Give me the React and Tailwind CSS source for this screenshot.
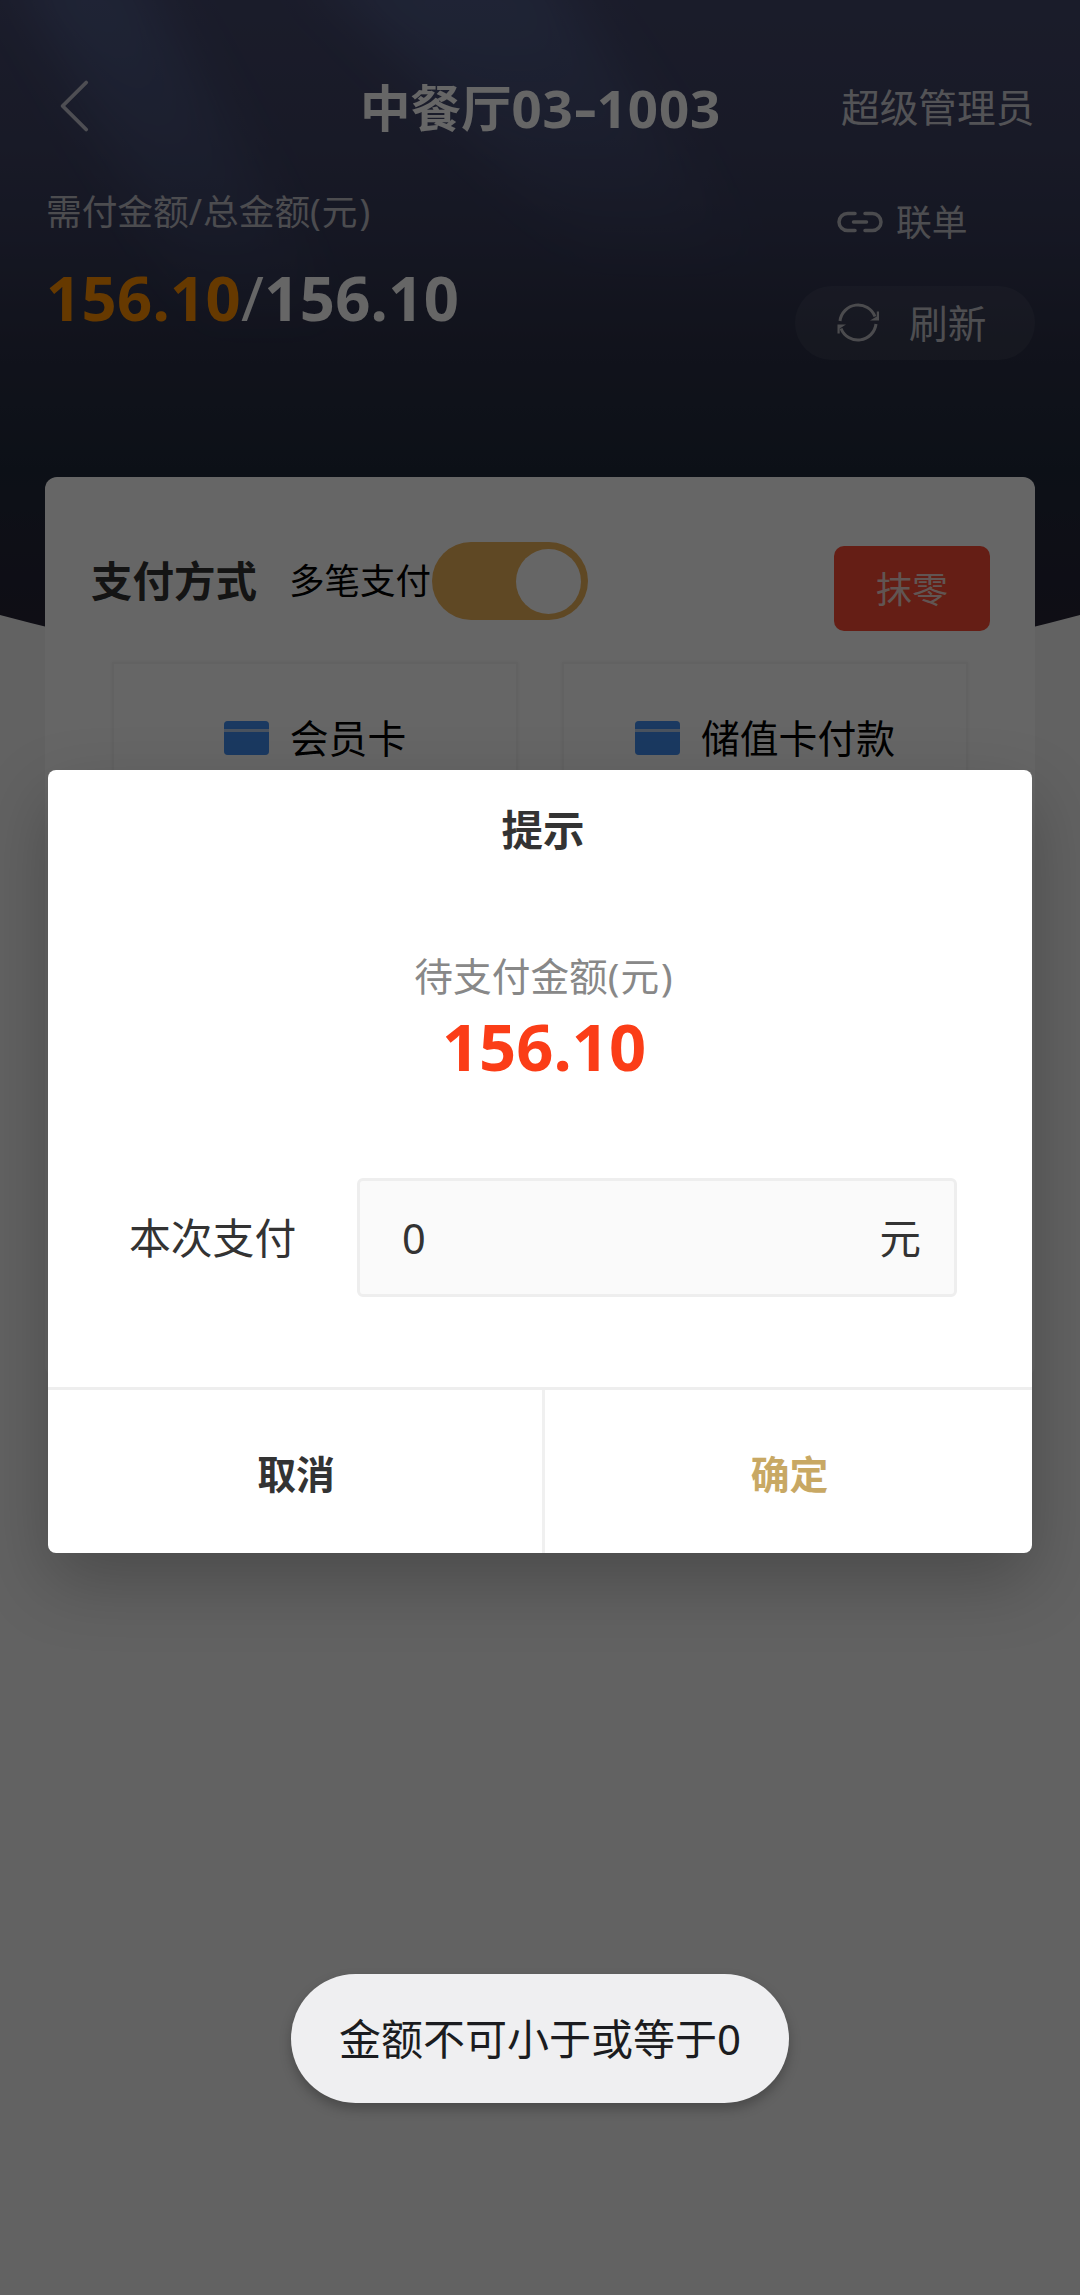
function BackIcon() {
  return (
    <svg className="h-[54px] w-8" viewBox="0 0 32 54" fill="none" stroke="#c4c4d0" strokeWidth="3.8" strokeLinecap="round" strokeLinejoin="round">
      <path d="M28.200 3.500 4.600 27l23.600 23.500" />
    </svg>
  );
}

function LinkIcon() {
  return (
    <svg className="h-6 w-12" viewBox="0 0 48 24" fill="none" stroke="#bcbcc4" strokeWidth="3.500" strokeLinecap="round">
      <path d="M19 3.500H11.500a8.500 8.500 0 0 0 0 17H19" />
      <path d="M29 3.500H36.500a8.500 8.500 0 0 1 0 17H29" />
      <path d="M17.500 12h13" />
    </svg>
  );
}

function RefreshIcon() {
  return (
    <svg className="h-[42px] w-[44px]" viewBox="0 0 44 42" fill="none" stroke="#bcbcc2" strokeWidth="3">
      <path d="M4 19A18.200 18.200 0 0 1 39 14.500" />
      <path d="M40 22A18.200 18.200 0 0 1 5 26.500" />
      <path d="M34 18.500H43V9.500L40.800 9.500V14.500Z" fill="#bcbcc2" stroke="none" />
      <path d="M10 22.500H1.500V31.500L3.700 31.500V26.500Z" fill="#bcbcc2" stroke="none" />
    </svg>
  );
}

function CardIcon() {
  return (
    <div className="flex h-[34px] w-[45px] flex-col gap-[3px] overflow-hidden rounded-[4px] bg-[#b9cfee]">
      <div className="h-2 bg-[#4390f2]" />
      <div className="flex-1 bg-[#4390f2]" />
    </div>
  );
}

function PayMethod({ label }) {
  return (
    <div className="flex h-[190px] w-[406px] items-start justify-center gap-[21px] border-2 border-[#f4f4f4] pt-[54px] shadow-[0_0_4px_rgba(0,0,0,0.060)]">
      <div className="flex h-10 items-center">
        <CardIcon />
      </div>
      <span className="text-[38.800px] leading-10 text-black">{label}</span>
    </div>
  );
}

function Header() {
  return (
    <header className="relative h-[477px]">
      <svg className="absolute left-0 top-0 h-[700px] w-[1080px]" viewBox="0 0 1080 700">
        <defs>
          <linearGradient id="night" x1="0" y1="0" x2="0" y2="1">
            <stop offset="0" stopColor="#43476a" />
            <stop offset="0.200" stopColor="#3e4262" />
            <stop offset="0.350" stopColor="#363a57" />
            <stop offset="0.500" stopColor="#2c3047" />
            <stop offset="0.680" stopColor="#202a3b" />
            <stop offset="0.800" stopColor="#242639" />
            <stop offset="0.900" stopColor="#262335" />
          </linearGradient>
          <linearGradient id="ray" x1="0" y1="0" x2="0" y2="1">
            <stop offset="0" stopColor="#5f76b0" stopOpacity="0.450" />
            <stop offset="1" stopColor="#5f76b0" stopOpacity="0" />
          </linearGradient>
          <filter id="soft" x="-50%" y="-50%" width="200%" height="200%">
            <feGaussianBlur stdDeviation="26" />
          </filter>
        </defs>
        <path d="M0 0H1080V615Q540 760 0 615Z" fill="url(#night)" />
        <g filter="url(#soft)" fill="url(#ray)">
          <path d="M10 -40H130L350 340H210Z" />
          <path d="M310 -40H540L760 270H600Z" />
        </g>
      </svg>
      <div className="relative flex h-full flex-col pt-[68px]">
        <div className="grid h-[78px] grid-cols-[360px_1fr_239px] items-start">
          <div className="flex h-[76px] items-center pl-[58px]">
            <BackIcon />
          </div>
          <h1 className="flex pt-[2px] text-[50.500px] font-bold leading-[76px] whitespace-nowrap text-white">
            <span>中餐厅</span>
            <span className="text-[52.800px] tracking-[0.900px]">03</span>
            <span className="w-[23px] origin-left scale-x-135 text-[52.500px]">-</span>
            <span className="text-[52.800px] tracking-[0.900px]">1003</span>
          </h1>
          <span className="pt-px text-[38.700px] leading-[76px] text-[#d0d0d6]">超级管理员</span>
        </div>
        <div className="flex justify-between pl-[46px] pr-[45px]">
          <div className="pt-[41px]">
            <div className="text-[35.700px] leading-[48px] text-[#bdbdc6]">
              需付金额<span className="tracking-[1px]">/</span>总金额<span className="tracking-[1px]">(</span>元<span className="pl-[2px]">)</span>
            </div>
            <div className="mt-[24px] text-[61.500px] font-bold leading-[76px] tracking-[0.300px] text-white">
              <span className="text-[#ff9000]">156.10</span>
              <span className="font-normal">/</span>156.10
            </div>
          </div>
          <div className="w-[240px] pt-[52px]">
            <div className="flex h-12 items-center gap-3 pl-[41px]">
              <LinkIcon />
              <span className="text-[35.800px] leading-[48px] text-[#c0c0c8]">联单</span>
            </div>
            <div className="mt-[40px] flex h-[74px] items-center gap-[29px] rounded-full bg-white/6 pl-[41px]">
              <RefreshIcon />
              <span className="text-[38.700px] leading-[74px] text-[#c4c4ca]">刷新</span>
            </div>
          </div>
        </div>
      </div>
    </header>
  );
}

function PaymentCard() {
  return (
    <section className="relative mx-[45px] h-[900px] rounded-[12px] bg-white pt-[65px]">
      <div className="flex items-start pl-[46px] pr-[45px]">
        <div className="flex h-[78px] flex-1 items-center">
          <h2 className="text-[41.500px] font-bold text-[#333]">支付方式</h2>
          <span className="ml-[32px] text-[35.500px] text-black">多笔支付</span>
          <div className="ml-px flex h-[78px] w-[156px] items-center justify-end rounded-full bg-[#eeb35b] pr-[7px]">
            <div className="size-[65px] rounded-full bg-white" />
          </div>
        </div>
        <button className="mt-1 h-[85px] w-[156px] rounded-[10px] bg-[#fd4c35] pt-[2px] text-[36px] text-[#f3d5cf]">抹零</button>
      </div>
      <div className="mt-[31px] flex gap-[44px] pl-[67px]">
        <PayMethod label="会员卡" />
        <PayMethod label="储值卡付款" />
      </div>
    </section>
  );
}

function AmountDialog() {
  return (
    <div className="absolute left-[48px] top-[770px] flex h-[783px] w-[984px] flex-col rounded-[8px] bg-white shadow-[0_28px_70px_rgba(0,0,0,0.240)]">
      <h3 className="pl-[6px] pt-[30px] text-center text-[41.500px] font-bold leading-[60px] text-[#333]">提示</h3>
      <div className="pl-[7px] pt-[88px] text-center text-[38.700px] leading-[56px] text-[#888]">
        待支付金额<span className="tracking-[1px]">(</span>元<span className="pl-[2px]">)</span>
      </div>
      <div className="pl-[8px] text-center text-[65px] font-bold leading-[84px] text-[#fb3d17]">156.10</div>
      <div className="mt-[90px] flex items-center pl-[81px]">
        <span className="w-[228px] pt-px text-[41.800px] text-[#333]">本次支付</span>
        <div className="flex h-[119px] w-[600px] items-center justify-between rounded-[6px] border-3 border-[#eee] bg-[#fafafa] pl-[42px] pr-[33px] pt-px text-[41.500px] text-[#333]">
          <span>0</span>
          <span>元</span>
        </div>
      </div>
      <div className="mt-auto flex h-[166px] border-t-3 border-[#eee] text-[38.800px] font-bold">
        <button className="w-[497px] border-r-3 border-[#f0f0f0] pl-[2px] pt-[6px] text-[#333]">取消</button>
        <button className="flex-1 pl-[2px] pt-[6px] text-[#c8a864]">确定</button>
      </div>
    </div>
  );
}

export default function App() {
  return (
    <div className="relative h-[2295px] w-[1080px] overflow-hidden bg-[#f5f5f5] [font-family:'Noto_Sans','Noto_Sans_CJK_SC',sans-serif]">
      <Header />
      <PaymentCard />
      <div className="absolute inset-0 bg-black/60" />
      <AmountDialog />
      <div className="absolute left-[291px] top-[1974px] flex h-[129px] w-[498px] items-center justify-center rounded-full bg-[#efeff1] text-[42px] text-[#1b1c20] shadow-[0_6px_12px_rgba(0,0,0,0.250)]">
        金额不可小于或等于0
      </div>
    </div>
  );
}
